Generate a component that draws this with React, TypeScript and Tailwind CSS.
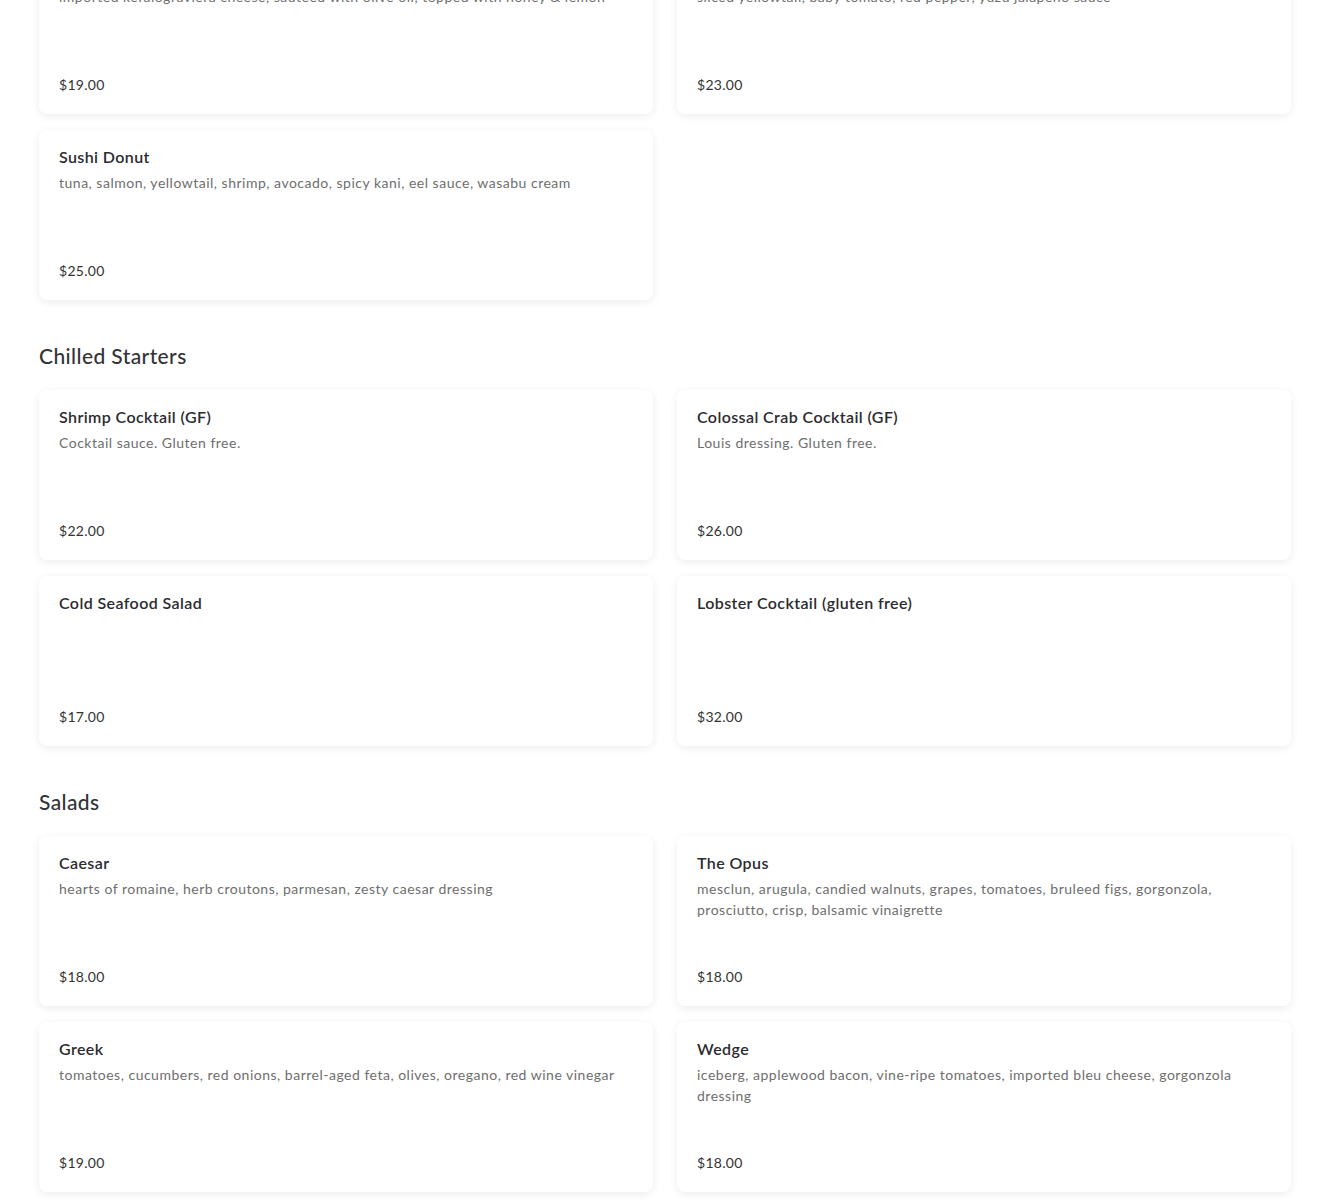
import React from "react";

type Item = { name: string; desc?: string; price: string };
type Section = { title?: string; items: Item[] };

const sections: Section[] = [
  {
    items: [
      {
        name: "Saganaki",
        desc: "imported kefalograviera cheese, sauteed with olive oil, topped with honey & lemon",
        price: "$19.00",
      },
      {
        name: "Yellowtail Jalapeño",
        desc: "sliced yellowtail, baby tomato, red pepper, yuzu jalapeño sauce",
        price: "$23.00",
      },
      {
        name: "Sushi Donut",
        desc: "tuna, salmon, yellowtail, shrimp, avocado, spicy kani, eel sauce, wasabu cream",
        price: "$25.00",
      },
    ],
  },
  {
    title: "Chilled Starters",
    items: [
      { name: "Shrimp Cocktail (GF)", desc: "Cocktail sauce. Gluten free.", price: "$22.00" },
      { name: "Colossal Crab Cocktail (GF)", desc: "Louis dressing. Gluten free.", price: "$26.00" },
      { name: "Cold Seafood Salad", price: "$17.00" },
      { name: "Lobster Cocktail (gluten free)", price: "$32.00" },
    ],
  },
  {
    title: "Salads",
    items: [
      {
        name: "Caesar",
        desc: "hearts of romaine, herb croutons, parmesan, zesty caesar dressing",
        price: "$18.00",
      },
      {
        name: "The Opus",
        desc: "mesclun, arugula, candied walnuts, grapes, tomatoes, bruleed figs, gorgonzola, prosciutto, crisp, balsamic vinaigrette",
        price: "$18.00",
      },
      {
        name: "Greek",
        desc: "tomatoes, cucumbers, red onions, barrel-aged feta, olives, oregano, red wine vinegar",
        price: "$19.00",
      },
      {
        name: "Wedge",
        desc: "iceberg, applewood bacon, vine-ripe tomatoes, imported bleu cheese, gorgonzola dressing",
        price: "$18.00",
      },
    ],
  },
];

function MenuCard({ item }: { item: Item }) {
  return (
    <div className="h-[170px] flex flex-col justify-between bg-white rounded-lg shadow-[0_2px_8px_rgba(0,0,0,0.08)] px-5 pt-[17px] pb-[19px]">
      <div>
        <h3 className="text-base leading-5 font-semibold tracking-[0.4px] text-[#2b2b30]">
          {item.name}
        </h3>
        {item.desc && (
          <p className="mt-[5px] text-sm leading-[21px] tracking-[0.5px] text-[#6e6e6e]">
            {item.desc}
          </p>
        )}
      </div>
      <div className="text-sm leading-5 tracking-[0.3px] text-[#333333]">{item.price}</div>
    </div>
  );
}

export default function App() {
  return (
    <div
      className="min-h-screen bg-white overflow-hidden"
      style={{ fontFamily: "Lato, 'Noto Sans', sans-serif" }}
    >
      <div className="px-[39px] mt-[-56px] pb-10">
        {sections.map((s, i) => (
          <section key={i} className={i > 0 ? "mt-[41px]" : ""}>
            {s.title && (
              <h2 className="text-[21px] leading-[30px] font-medium tracking-[0.4px] text-[#333338] mb-[19px]">
                {s.title}
              </h2>
            )}
            <div className="grid grid-cols-2 gap-x-6 gap-y-4">
              {s.items.map((it) => (
                <MenuCard key={it.name} item={it} />
              ))}
            </div>
          </section>
        ))}
      </div>
    </div>
  );
}
